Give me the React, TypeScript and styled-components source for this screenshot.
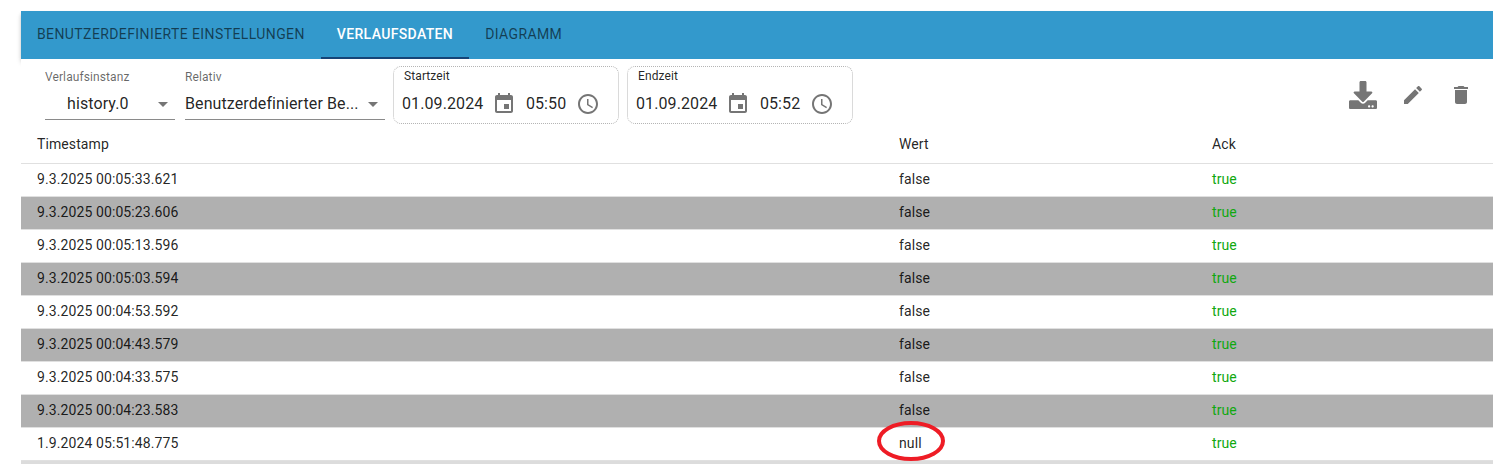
import styled, { createGlobalStyle } from "styled-components";
import { FaDownload } from "react-icons/fa";

const rows = [
  { ts: "9.3.2025 00:05:33.621", val: "false" },
  { ts: "9.3.2025 00:05:23.606", val: "false" },
  { ts: "9.3.2025 00:05:13.596", val: "false" },
  { ts: "9.3.2025 00:05:03.594", val: "false" },
  { ts: "9.3.2025 00:04:53.592", val: "false" },
  { ts: "9.3.2025 00:04:43.579", val: "false" },
  { ts: "9.3.2025 00:04:33.575", val: "false" },
  { ts: "9.3.2025 00:04:23.583", val: "false" },
  { ts: "1.9.2024 05:51:48.775", val: "null", circled: true },
];

const GlobalStyle = createGlobalStyle`
  html, body {
    margin: 0;
    background: #fff;
    overflow: hidden;
    font-family: Roboto, "Liberation Sans", sans-serif;
    color: rgba(0, 0, 0, 0.87);
    letter-spacing: 0.1px;
  }
`;

const Page = styled.div`
  height: 464px;
  padding: 11px 0 0 21px;
  box-sizing: border-box;
  overflow: hidden;
`;

const AppBar = styled.div`
  height: 48px;
  background: #3399cc;
  display: flex;
  box-shadow: 0 2px 4px -1px rgba(0, 0, 0, 0.2), 0 4px 5px 0 rgba(0, 0, 0, 0.14);
`;

const Tab = styled.div<{ $active?: boolean }>`
  padding: 0 16px;
  display: flex;
  align-items: center;
  box-sizing: border-box;
  font-size: 14px;
  font-weight: ${({ $active }) => ($active ? 500 : 400)};
  letter-spacing: ${({ $active }) => ($active ? "0.35px" : "0.4px")};
  line-height: 46px;
  text-transform: uppercase;
  white-space: nowrap;
  color: ${({ $active }) => ($active ? "#fff" : "rgba(0, 0, 0, 0.6)")};
  border-bottom: 2px solid ${({ $active }) => ($active ? "#164477" : "transparent")};
`;

const Toolbar = styled.div`
  height: 65px;
  display: flex;
  align-items: flex-start;
  padding: 7px 0 0 24px;
  box-sizing: border-box;
  background: #fff;
  position: relative;
`;

const SelectBox = styled.div<{ $width: number; $indent?: number; $gap: number }>`
  width: ${({ $width }) => $width}px;
  margin-right: ${({ $gap }) => $gap}px;
  padding-top: 5px;
  position: relative;
  .label {
    display: block;
    font-size: 12px;
    line-height: 12px;
    color: rgba(0, 0, 0, 0.6);
  }
  .value {
    display: flex;
    align-items: center;
    justify-content: space-between;
    margin-top: 5px;
    height: 31px;
    border-bottom: 1px solid #8a8a8a;
    font-size: 16px;
    padding-left: ${({ $indent }) => $indent ?? 0}px;
  }
  svg {
    width: 24px;
    height: 24px;
    fill: #757575;
    flex: none;
  }
`;

const DateBox = styled.fieldset`
  width: 226px;
  height: 58px;
  margin: 0 8px 0 0;
  padding: 0 0 0 8px;
  box-sizing: border-box;
  border: 1px dotted #b5b5b5;
  border-radius: 8px;
  display: flex;
  align-items: center;
  position: relative;
  min-width: 0;
`;

const DateLabel = styled.span`
  position: absolute;
  left: 10px;
  top: 2px;
  font-size: 12px;
  line-height: 14px;
  color: rgba(0, 0, 0, 0.87);
`;

const DateValue = styled.span<{ $gap?: number }>`
  font-size: 16px;
  line-height: 24px;
  margin: 17px 0 0 ${({ $gap }) => $gap ?? 0}px;
  color: rgba(0, 0, 0, 0.87);
`;

const PickerIcon = styled.svg<{ $gap: number }>`
  width: 24px;
  height: 24px;
  fill: #757575;
  margin: 17px 0 0 ${({ $gap }) => $gap}px;
  flex: none;
`;

const Actions = styled.div`
  margin-left: auto;
  display: flex;
  align-items: center;
  padding: 9px 8px 0 0;
`;

const ActionSlot = styled.div<{ $width: number }>`
  width: ${({ $width }) => $width}px;
  height: 40px;
  display: flex;
  align-items: center;
  justify-content: center;
  color: #757575;
  svg {
    fill: #757575;
  }
`;

const HeaderRow = styled.div`
  height: 40px;
  box-sizing: border-box;
  display: grid;
  grid-template-columns: 862px 313px 1fr;
  align-items: center;
  font-size: 14px;
  font-weight: 400;
  border-bottom: 1px solid #e0e0e0;
  background: #fff;
  position: relative;
`;

const Cell = styled.div<{ $green?: boolean }>`
  padding-left: 16px;
  font-size: 14px;
  color: ${({ $green }) => ($green ? "#0fa80f" : "rgba(0, 0, 0, 0.87)")};
`;

const Row = styled.div<{ $striped: boolean }>`
  height: 33px;
  box-sizing: border-box;
  padding-bottom: 3px;
  display: grid;
  grid-template-columns: 862px 313px 1fr;
  align-items: center;
  background: ${({ $striped }) => ($striped ? "#b0b0b0" : "#fff")};
  border-bottom: 1px solid #e0e0e0;
`;

const NextRow = styled.div`
  height: 12px;
  background: #dcdcdc;
`;

const CircledValue = styled.span`
  position: relative;
  display: inline-block;
`;

const RedCircle = styled.svg`
  position: absolute;
  left: -23px;
  top: -16px;
  width: 70px;
  height: 44px;
  overflow: visible;
  pointer-events: none;
`;

const ArrowDown = () => (
  <svg viewBox="0 0 24 24">
    <path d="M7 10l5 5 5-5z" />
  </svg>
);

const EVENT =
  "M17 12h-5v5h5v-5zM16 1v2H8V1H6v2H5c-1.11 0-1.99.9-1.99 2L3 19c0 1.1.89 2 2 2h14c1.1 0 2-.9 2-2V5c0-1.1-.9-2-2-2h-1V1h-2zm3 18H5V8h14v11z";
const CLOCK =
  "M11.99 2C6.47 2 2 6.48 2 12s4.47 10 9.99 10C17.52 22 22 17.52 22 12S17.52 2 11.99 2zM12 20c-4.42 0-8-3.58-8-8s3.58-8 8-8 8 3.58 8 8-3.58 8-8 8zM12.5 7H11v6l5.25 3.15.75-1.23-4.5-2.67z";

const DateRange = ({ label, date, time }: { label: string; date: string; time: string }) => (
  <DateBox>
    <DateLabel>{label}</DateLabel>
    <DateValue>{date}</DateValue>
    <PickerIcon $gap={9} viewBox="0 0 24 24">
      <path d={EVENT} />
    </PickerIcon>
    <DateValue $gap={9.5}>{time}</DateValue>
    <PickerIcon $gap={9.5} viewBox="0 0 24 24">
      <path d={CLOCK} />
    </PickerIcon>
  </DateBox>
);

export default function App() {
  return (
    <Page>
      <GlobalStyle />
      <AppBar>
        <Tab>Benutzerdefinierte Einstellungen</Tab>
        <Tab $active>Verlaufsdaten</Tab>
        <Tab>Diagramm</Tab>
      </AppBar>
      <Toolbar>
        <SelectBox $width={130} $indent={22} $gap={10}>
          <span className="label">Verlaufsinstanz</span>
          <div className="value">
            history.0
            <ArrowDown />
          </div>
        </SelectBox>
        <SelectBox $width={200} $gap={8}>
          <span className="label">Relativ</span>
          <div className="value">
            Benutzerdefinierter Be...
            <ArrowDown />
          </div>
        </SelectBox>
        <DateRange label="Startzeit" date="01.09.2024" time="05:50" />
        <DateRange label="Endzeit" date="01.09.2024" time="05:52" />
        <Actions>
          <ActionSlot $width={52}>
            <FaDownload size={28} />
          </ActionSlot>
          <ActionSlot $width={48}>
            <svg viewBox="0 0 24 24" width={24} height={24}>
              <path d="M3 17.25V21h3.75L17.81 9.94l-3.75-3.75L3 17.25zM20.71 7.04c.39-.39.39-1.02 0-1.41l-2.34-2.34c-.39-.39-1.02-.39-1.41 0l-1.83 1.83 3.75 3.75 1.83-1.83z" />
            </svg>
          </ActionSlot>
          <ActionSlot $width={48}>
            <svg viewBox="0 0 24 24" width={24} height={24}>
              <path d="M6 19c0 1.1.9 2 2 2h8c1.1 0 2-.9 2-2V7H6v12zM19 4h-3.5l-1-1h-5l-1 1H5v2h14V4z" />
            </svg>
          </ActionSlot>
        </Actions>
      </Toolbar>
      <HeaderRow>
        <Cell>Timestamp</Cell>
        <Cell>Wert</Cell>
        <Cell>Ack</Cell>
      </HeaderRow>
      {rows.map((row, i) => (
        <Row key={i} $striped={i % 2 === 1}>
          <Cell>{row.ts}</Cell>
          <Cell>
            {row.circled ? (
              <CircledValue>
                {row.val}
                <RedCircle viewBox="0 0 70 44">
                  <ellipse cx="35" cy="22" rx="32" ry="18" fill="none" stroke="#ee1c25" strokeWidth="4" />
                </RedCircle>
              </CircledValue>
            ) : (
              row.val
            )}
          </Cell>
          <Cell $green>true</Cell>
        </Row>
      ))}
      <NextRow />
    </Page>
  );
}
